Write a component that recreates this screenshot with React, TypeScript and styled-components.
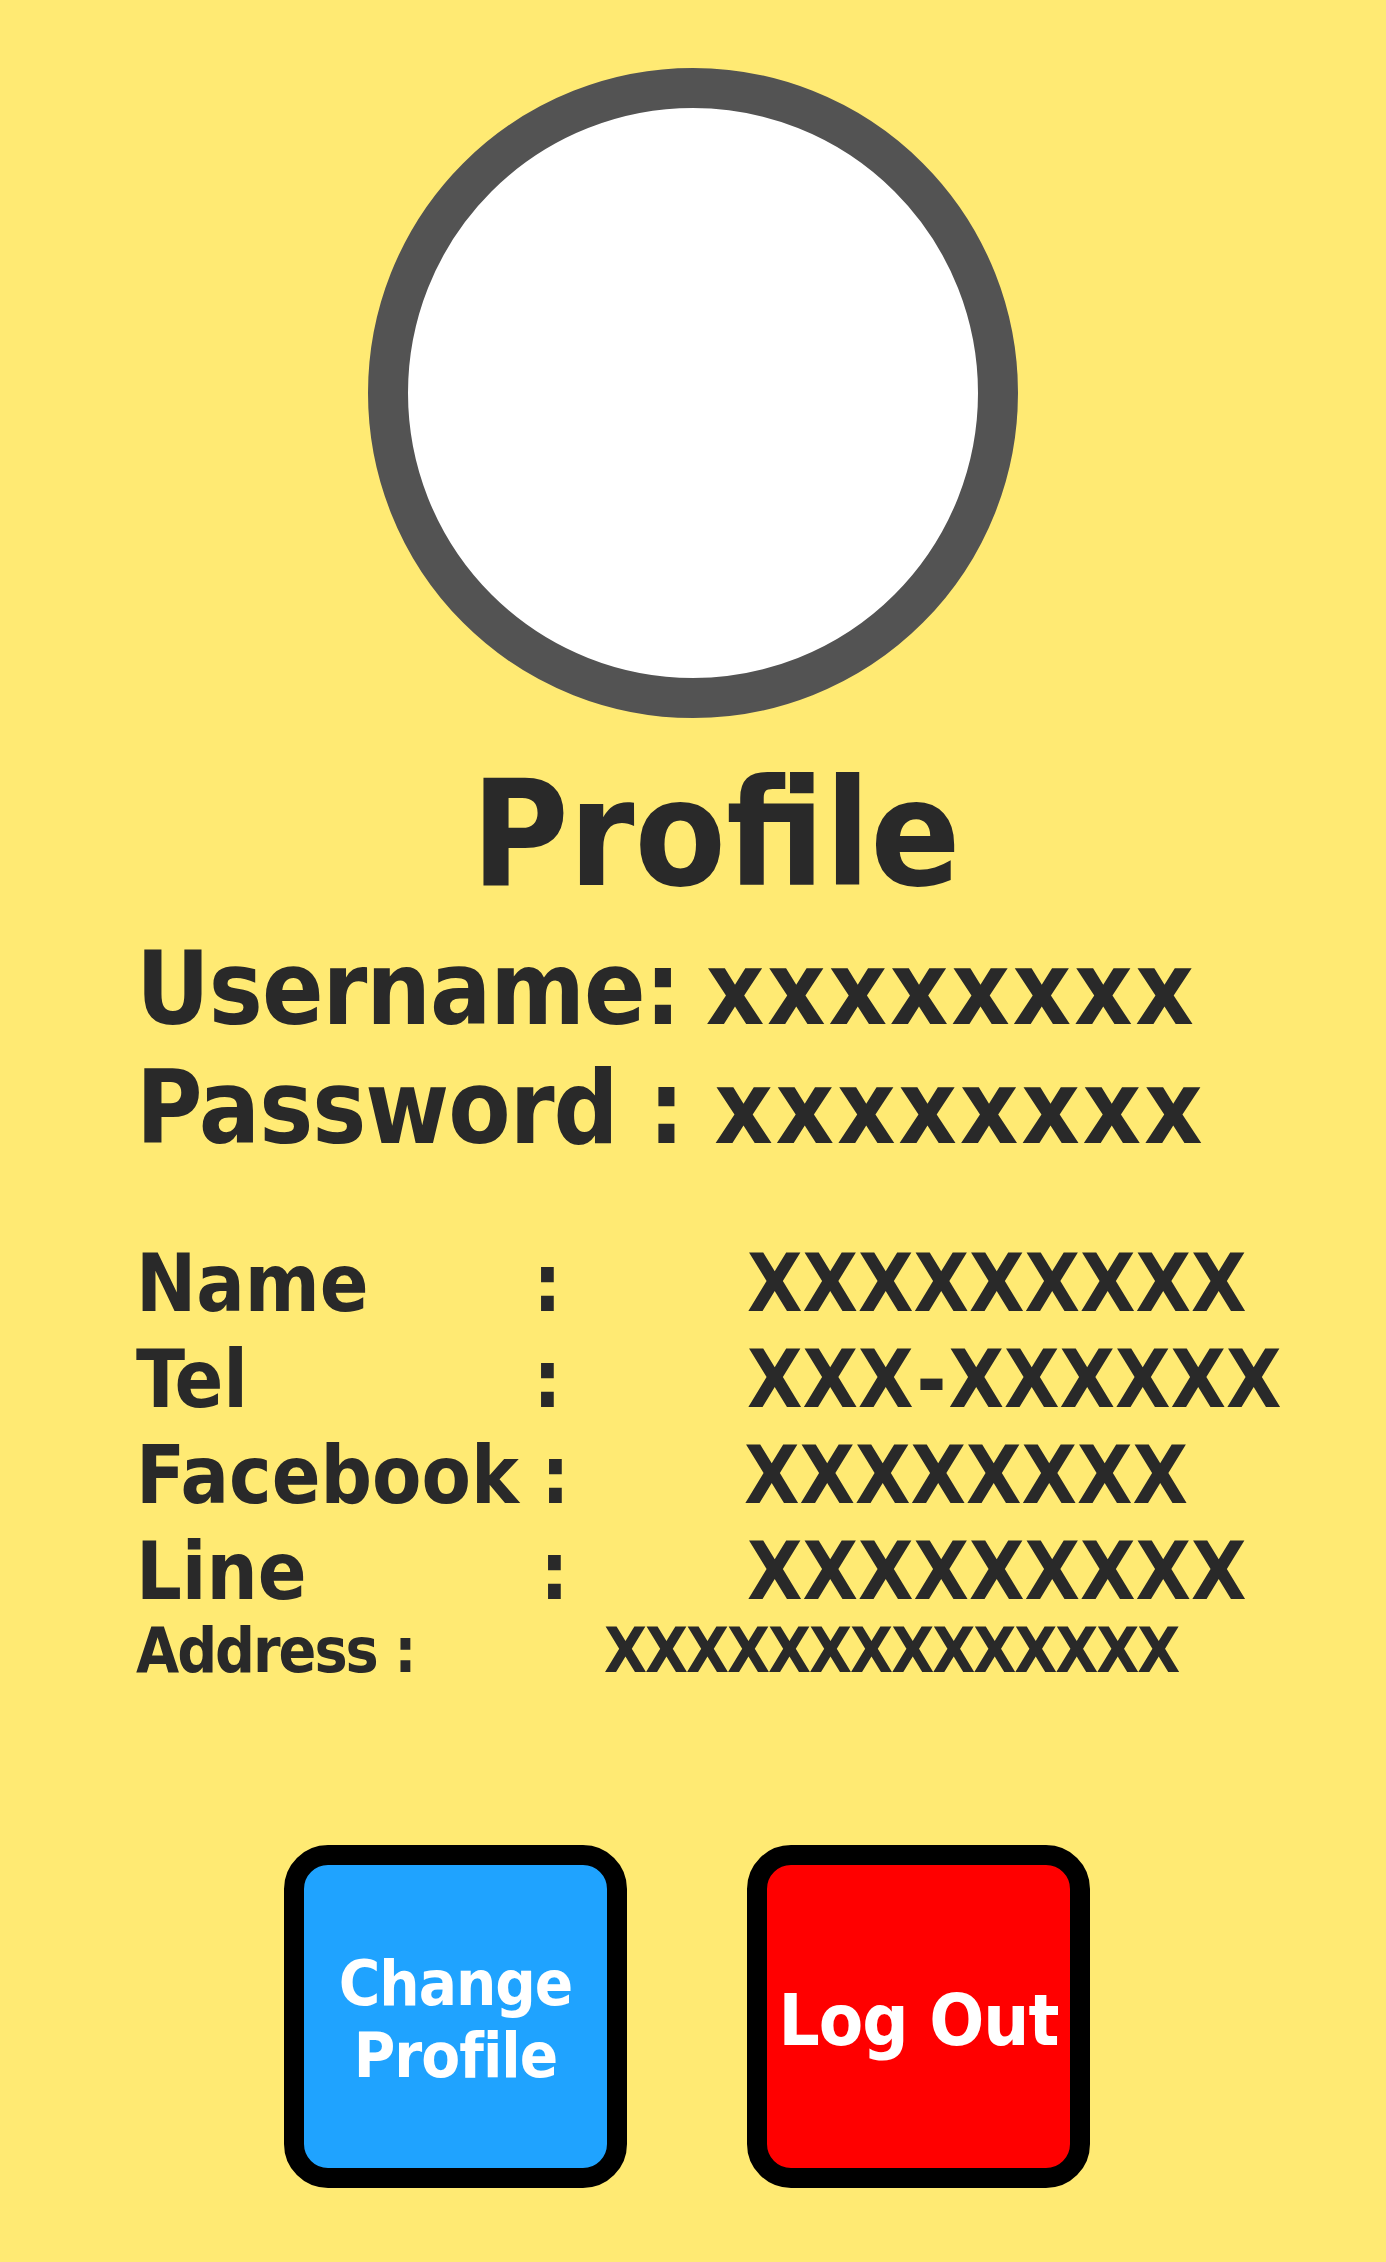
import React from 'react';
import styled, { createGlobalStyle } from 'styled-components';

const GlobalStyle = createGlobalStyle`
  html, body {
    margin: 0;
    padding: 0;
    background: #ffea73;
  }
  body {
    font-family: "DejaVu Sans Condensed", "DejaVu Sans", "Liberation Sans", sans-serif;
    font-stretch: condensed;
    font-weight: bold;
    color: #292929;
  }
`;

const Page = styled.div`
  width: 1386px;
  min-height: 2262px;
  display: flex;
  flex-direction: column;
  background: #ffea73;
`;

const Avatar = styled.div`
  box-sizing: border-box;
  width: 650px;
  height: 650px;
  margin: 68px auto 0;
  border: 40px solid #535353;
  border-radius: 50%;
  background: #ffffff;
`;

const Title = styled.h1`
  margin: 42px 0 0;
  padding-left: 46px;
  text-align: center;
  font-size: 148px;
  line-height: 148px;
  font-weight: bold;
`;

const Credentials = styled.div`
  margin-top: 22px;
  padding-left: 136px;
`;

const CredLine = styled.div`
  font-size: 101px;
  line-height: 119px;
  letter-spacing: -1px;
  white-space: pre;
`;

const CredValue = styled.span<{ $shift?: number }>`
  margin-left: ${({ $shift }) => $shift ?? 0}px;
  letter-spacing: 2.8px;
`;

const Details = styled.div`
  margin-top: 68px;
  padding-left: 136px;
  display: grid;
  grid-template-columns: 397px 214px 1fr;
  font-size: 80px;
  line-height: 96px;
  white-space: pre;
`;

const Label = styled.div``;

const Colon = styled.div<{ $shift?: number }>`
  margin-left: ${({ $shift }) => $shift ?? 0}px;
`;

const Value = styled.div<{ $shift?: number }>`
  margin-left: ${({ $shift }) => $shift ?? 0}px;
`;

const Dash = styled.span`
  margin: 0 2px 0 3px;
`;

const AddressRow = styled.div`
  padding-left: 136px;
  display: flex;
  font-size: 62px;
  line-height: 62px;
  letter-spacing: -2px;
  white-space: pre;
`;

const AddressLabel = styled.span`
  width: 468px;
`;

const ButtonRow = styled.div`
  margin-top: 163px;
  padding-left: 284px;
  display: flex;
  gap: 120px;
`;

const ActionButton = styled.button<{ $bg: string; $size: number }>`
  box-sizing: border-box;
  width: 343px;
  height: 343px;
  border: 20px solid #000000;
  border-radius: 44px;
  background: ${({ $bg }) => $bg};
  color: #ffffff;
  font-family: inherit;
  font-stretch: condensed;
  font-weight: bold;
  font-size: ${({ $size }) => $size}px;
  line-height: 72px;
  letter-spacing: -1px;
  padding: 6px 0 0;
  display: flex;
  align-items: center;
  justify-content: center;
  text-align: center;
  cursor: pointer;
`;

const rows: { label: string; value: React.ReactNode; colon: number; val: number }[] = [
  { label: 'Name', value: 'XXXXXXXXX', colon: 0, val: 0 },
  {
    label: 'Tel',
    value: (
      <>
        XXX<Dash>-</Dash>XXXXXX
      </>
    ),
    colon: 0,
    val: 0,
  },
  { label: 'Facebook', value: 'XXXXXXXX', colon: 8, val: -3 },
  { label: 'Line', value: 'XXXXXXXXX', colon: 7, val: 0 },
];

const App: React.FC = () => {
  return (
    <>
      <GlobalStyle />
      <Page>
        <Avatar />
        <Title>Profile</Title>
        <Credentials>
          <CredLine>
            Username: <CredValue $shift={-5}>xxxxxxxx</CredValue>
          </CredLine>
          <CredLine>
            Password : <CredValue>xxxxxxxx</CredValue>
          </CredLine>
        </Credentials>
        <Details>
          {rows.map((r) => (
            <React.Fragment key={r.label}>
              <Label>{r.label}</Label>
              <Colon $shift={r.colon}>:</Colon>
              <Value $shift={r.val}>{r.value}</Value>
            </React.Fragment>
          ))}
        </Details>
        <AddressRow>
          <AddressLabel>Address :</AddressLabel>
          <span>XXXXXXXXXXXXXX</span>
        </AddressRow>
        <ButtonRow>
          <ActionButton $bg="#1fa3ff" $size={63}>
            Change
            <br />
            Profile
          </ActionButton>
          <ActionButton $bg="#ff0000" $size={72}>
            Log Out
          </ActionButton>
        </ButtonRow>
      </Page>
    </>
  );
};

export default App;
